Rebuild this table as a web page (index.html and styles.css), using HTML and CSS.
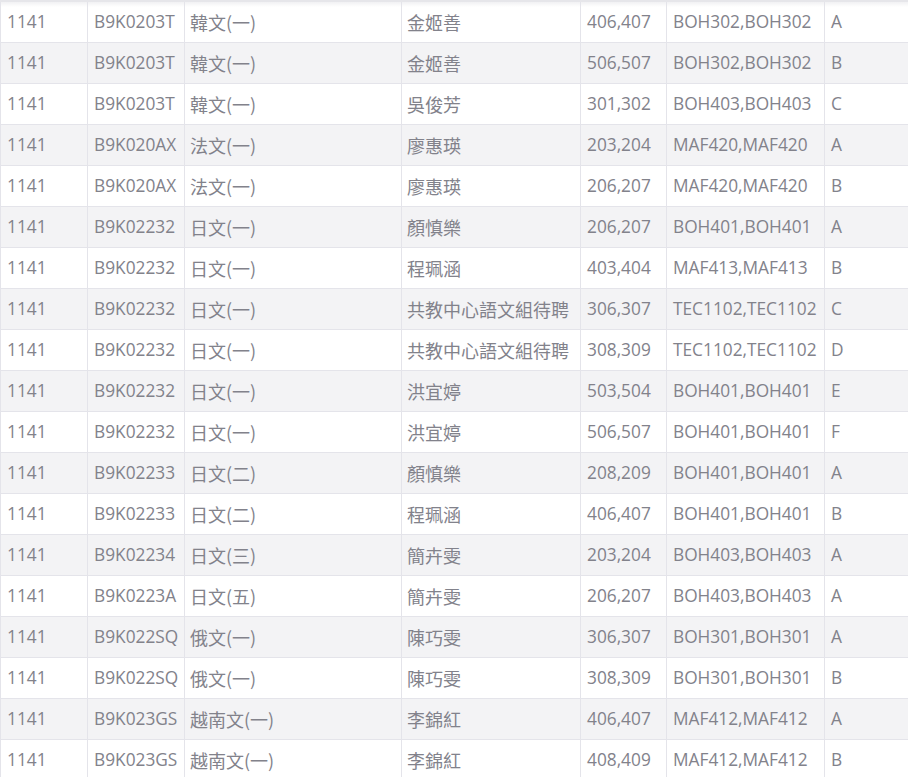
FILE: index.html
```html
<!DOCTYPE html>
<html lang="zh-Hant">
<head>
<meta charset="utf-8">
<title>課程列表</title>
<link rel="stylesheet" href="styles.css">
</head>
<body>
<table class="course-table">
<colgroup>
<col class="c-term"><col class="c-code"><col class="c-name"><col class="c-teacher"><col class="c-time"><col class="c-room"><col class="c-class">
</colgroup>
<tbody>
<tr><td>1141</td><td>B9K0203T</td><td class="zh">韓文(一)</td><td class="zh">金姬善</td><td>406,407</td><td>BOH302,BOH302</td><td>A</td></tr>
<tr><td>1141</td><td>B9K0203T</td><td class="zh">韓文(一)</td><td class="zh">金姬善</td><td>506,507</td><td>BOH302,BOH302</td><td>B</td></tr>
<tr><td>1141</td><td>B9K0203T</td><td class="zh">韓文(一)</td><td class="zh">吳俊芳</td><td>301,302</td><td>BOH403,BOH403</td><td>C</td></tr>
<tr><td>1141</td><td>B9K020AX</td><td class="zh">法文(一)</td><td class="zh">廖惠瑛</td><td>203,204</td><td>MAF420,MAF420</td><td>A</td></tr>
<tr><td>1141</td><td>B9K020AX</td><td class="zh">法文(一)</td><td class="zh">廖惠瑛</td><td>206,207</td><td>MAF420,MAF420</td><td>B</td></tr>
<tr><td>1141</td><td>B9K02232</td><td class="zh">日文(一)</td><td class="zh">顏慎樂</td><td>206,207</td><td>BOH401,BOH401</td><td>A</td></tr>
<tr><td>1141</td><td>B9K02232</td><td class="zh">日文(一)</td><td class="zh">程珮涵</td><td>403,404</td><td>MAF413,MAF413</td><td>B</td></tr>
<tr><td>1141</td><td>B9K02232</td><td class="zh">日文(一)</td><td class="zh">共教中心語文組待聘</td><td>306,307</td><td>TEC1102,TEC1102</td><td>C</td></tr>
<tr><td>1141</td><td>B9K02232</td><td class="zh">日文(一)</td><td class="zh">共教中心語文組待聘</td><td>308,309</td><td>TEC1102,TEC1102</td><td>D</td></tr>
<tr><td>1141</td><td>B9K02232</td><td class="zh">日文(一)</td><td class="zh">洪宜婷</td><td>503,504</td><td>BOH401,BOH401</td><td>E</td></tr>
<tr><td>1141</td><td>B9K02232</td><td class="zh">日文(一)</td><td class="zh">洪宜婷</td><td>506,507</td><td>BOH401,BOH401</td><td>F</td></tr>
<tr><td>1141</td><td>B9K02233</td><td class="zh">日文(二)</td><td class="zh">顏慎樂</td><td>208,209</td><td>BOH401,BOH401</td><td>A</td></tr>
<tr><td>1141</td><td>B9K02233</td><td class="zh">日文(二)</td><td class="zh">程珮涵</td><td>406,407</td><td>BOH401,BOH401</td><td>B</td></tr>
<tr><td>1141</td><td>B9K02234</td><td class="zh">日文(三)</td><td class="zh">簡卉雯</td><td>203,204</td><td>BOH403,BOH403</td><td>A</td></tr>
<tr><td>1141</td><td>B9K0223A</td><td class="zh">日文(五)</td><td class="zh">簡卉雯</td><td>206,207</td><td>BOH403,BOH403</td><td>A</td></tr>
<tr><td>1141</td><td>B9K022SQ</td><td class="zh">俄文(一)</td><td class="zh">陳巧雯</td><td>306,307</td><td>BOH301,BOH301</td><td>A</td></tr>
<tr><td>1141</td><td>B9K022SQ</td><td class="zh">俄文(一)</td><td class="zh">陳巧雯</td><td>308,309</td><td>BOH301,BOH301</td><td>B</td></tr>
<tr><td>1141</td><td>B9K023GS</td><td class="zh">越南文(一)</td><td class="zh">李錦紅</td><td>406,407</td><td>MAF412,MAF412</td><td>A</td></tr>
<tr><td>1141</td><td>B9K023GS</td><td class="zh">越南文(一)</td><td class="zh">李錦紅</td><td>408,409</td><td>MAF412,MAF412</td><td>B</td></tr>
</tbody>
</table>
</body>
</html>
```
FILE: styles.css
```css
html, body {
  margin: 0;
  padding: 0;
  background: #ffffff;
}

.course-table {
  width: 908px;
  table-layout: fixed;
  border-collapse: separate;
  border-spacing: 0;
  border-top: 2px solid #e6e6ea;
  font-family: "Open Sans", "Noto Sans CJK TC", sans-serif;
  font-size: 17.3px;
  color: #82828b;
}

.c-term { width: 87px; }
.c-code { width: 97px; }
.c-name { width: 217px; }
.c-teacher { width: 179px; }
.c-time { width: 86px; }
.c-room { width: 158px; }
.c-class { width: 84px; }

.course-table td {
  box-sizing: border-box;
  height: 41px;
  padding: 0 0 0 6px;
  border-left: 1px solid #e4e4ea;
  border-bottom: 1px solid #e4e4ea;
  white-space: nowrap;
  overflow: hidden;
  vertical-align: middle;
  line-height: 24px;
}

.course-table td.zh {
  font-family: "Noto Sans CJK TC", sans-serif;
  font-size: 18px;
  padding-left: 5px;
}

.course-table tr:nth-child(even) td {
  background: #f3f3f5;
}

.course-table tr:first-child td {
  background: linear-gradient(#f1f1f3, #ffffff 5px);
}
```
